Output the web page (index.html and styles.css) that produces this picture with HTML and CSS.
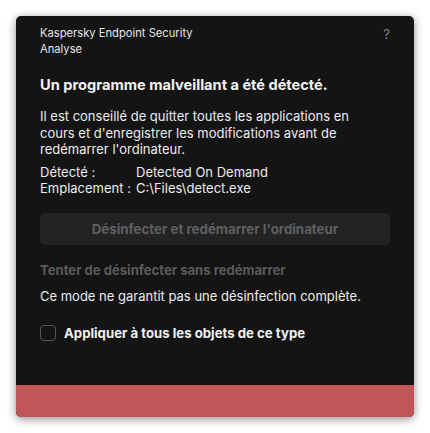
FILE: index.html
```html
<!DOCTYPE html>
<html lang="fr">
<head>
<meta charset="utf-8">
<link rel="stylesheet" href="styles.css">
</head>
<body>
<div class="window">
  <div class="content">
    <div class="header">
      <div class="app">
        <div>Kaspersky Endpoint Security</div>
        <div>Analyse</div>
      </div>
      <div class="help">?</div>
    </div>
    <h1 class="title">Un programme malveillant a été détecté.</h1>
    <p class="desc">Il est conseillé de quitter toutes les applications en cours et d'enregistrer les modifications avant de redémarrer l'ordinateur.</p>
    <div class="info">
      <div class="row"><span class="label">Détecté :</span><span>Detected On Demand</span></div>
      <div class="row"><span class="label">Emplacement :</span><span>C:\Files\detect.exe</span></div>
    </div>
    <div class="button">Désinfecter et redémarrer l'ordinateur</div>
    <div class="link">Tenter de désinfecter sans redémarrer</div>
    <div class="note">Ce mode ne garantit pas une désinfection complète.</div>
    <label class="check"><span class="box"></span><span class="check-label">Appliquer à tous les objets de ce type</span></label>
  </div>
  <div class="footer"></div>
</div>
</body>
</html>
```
FILE: styles.css
```css
html, body {
  margin: 0;
  padding: 0;
  background: #ffffff;
}
body {
  padding: 16px;
  font-family: Inter, "Noto Sans", sans-serif;
}
.window {
  width: 398px;
  height: 401px;
  background: #141414;
  border-radius: 5px;
  overflow: hidden;
  display: flex;
  flex-direction: column;
  box-shadow: 0 2px 10px rgba(0, 0, 0, 0.45);
  color: #ececec;
}
.content {
  flex: 1;
  padding: 9px 24px 0 24px;
}
.header {
  display: flex;
  justify-content: space-between;
  font-size: 11.2px;
  line-height: 16px;
  color: #e6e6e6;
}
.help {
  color: #8a8a8a;
  font-size: 13px;
  line-height: 14px;
  margin-top: 2px;
}
.title {
  margin: 17px 0 0 0;
  font-size: 14.6px;
  line-height: 22px;
  font-weight: 700;
  color: #f2f2f2;
}
.desc {
  margin: 12px 0 0 0;
  max-width: 330px;
  font-size: 13px;
  line-height: 16.5px;
}
.info {
  margin-top: 6px;
  font-size: 13px;
  line-height: 16.5px;
}
.row {
  display: flex;
}
.label {
  width: 96px;
}
.button {
  margin-top: 16px;
  height: 32px;
  background: #232323;
  border-radius: 5px;
  color: #5f5f5f;
  font-weight: 700;
  font-size: 13.3px;
  display: flex;
  align-items: center;
  justify-content: center;
}
.link {
  margin-top: 17px;
  font-size: 13.1px;
  line-height: 16px;
  font-weight: 700;
  color: #5a5a5a;
}
.note {
  margin-top: 10px;
  font-size: 13px;
  line-height: 16px;
}
.check {
  margin-top: 21px;
  display: flex;
  align-items: center;
  gap: 8px;
}
.box {
  width: 14px;
  height: 14px;
  border: 1px solid #555;
  border-radius: 4px;
}
.check-label {
  font-size: 13.2px;
  font-weight: 700;
  color: #f0f0f0;
}
.footer {
  height: 32px;
  background: #c05658;
}
```
